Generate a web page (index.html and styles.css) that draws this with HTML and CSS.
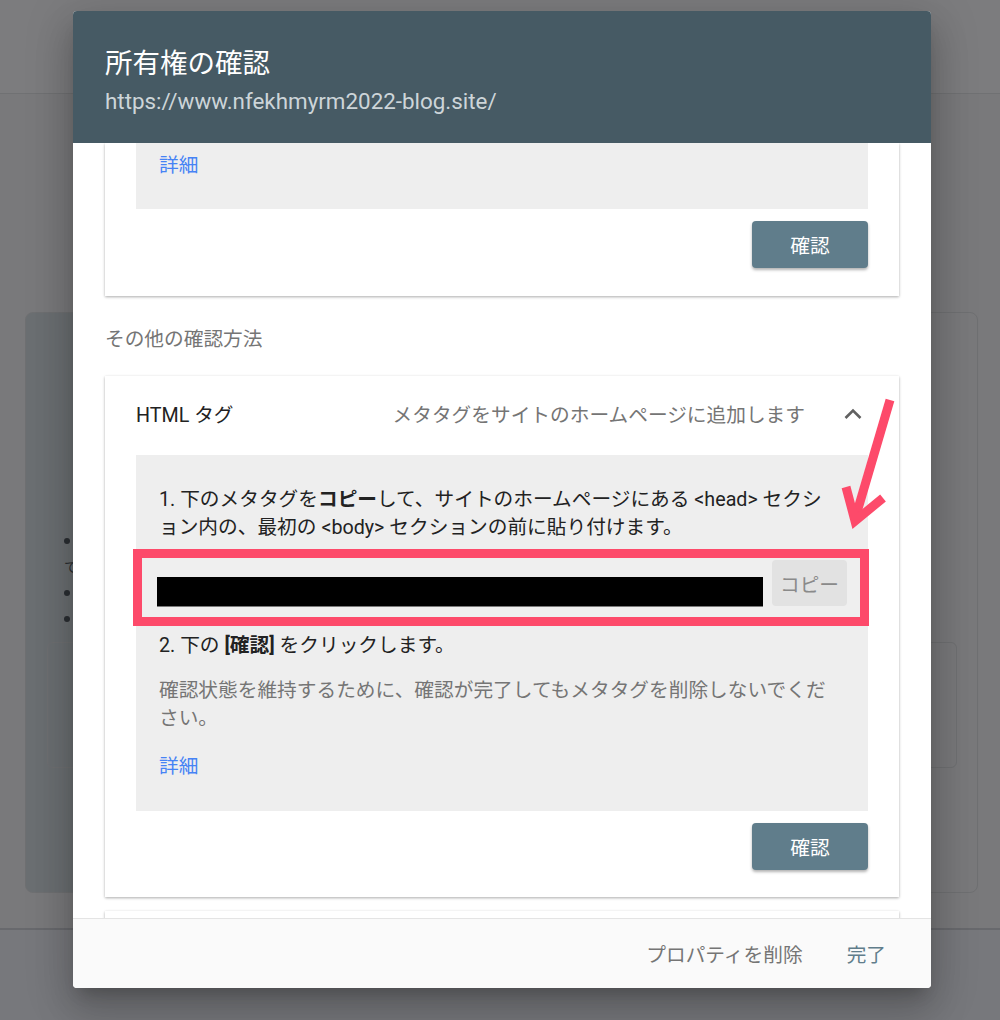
FILE: index.html
```html
<!DOCTYPE html>
<html lang="ja">
<head>
<meta charset="utf-8">
<title>所有権の確認</title>
<link rel="stylesheet" href="styles.css">
</head>
<body>
<div class="page">
  <div class="page-top"></div>
  <div class="page-main">
    <div class="bg-card">
      <div class="bg-lines">
        <div class="bg-line"><span class="dot"></span>ウェブサイトのホームページ</div>
        <div class="bg-line">ています</div>
        <div class="bg-line"><span class="dot"></span>サイトの所有者</div>
        <div class="bg-line"><span class="dot"></span>プロパティ</div>
      </div>
      <div class="bg-box"></div>
    </div>
  </div>
  <div class="page-bottom"></div>
</div>

<div class="dialog">
  <header class="dlg-head">
    <h1 class="dlg-title">所有権の確認</h1>
    <div class="dlg-url">https://www.nfekhmyrm2022-blog.site/</div>
  </header>

  <div class="dlg-body">
    <section class="card card-cut">
      <div class="gray gray-top"><a class="link">詳細</a></div>
      <div class="actions"><button class="btn">確認</button></div>
    </section>

    <h2 class="section-label">その他の確認方法</h2>

    <section class="card">
      <div class="card-head">
        <span class="method">HTML タグ</span>
        <span class="desc">メタタグをサイトのホームページに追加します</span>
        <span class="chev">
          <svg width="24" height="24" viewBox="0 0 24 24"><path d="M4.5 16 L12 8.5 L19.5 16" fill="none" stroke="#616161" stroke-width="2.6"/></svg>
        </span>
      </div>
      <div class="gray">
        <p class="step">1. 下のメタタグを<b>コピー</b>して、サイトのホームページにある &lt;head&gt; セクション内の、最初の &lt;body&gt; セクションの前に貼り付けます。</p>
        <div class="meta-row">
          <span class="redacted"></span>
          <button class="copy">コピー</button>
        </div>
        <p class="step step2">2. 下の <b>[確認]</b> をクリックします。</p>
        <p class="note">確認状態を維持するために、確認が完了してもメタタグを削除しないでください。</p>
        <a class="link">詳細</a>
      </div>
      <div class="actions"><button class="btn">確認</button></div>
    </section>

    <section class="card card-peek"></section>
  </div>

  <footer class="dlg-foot">
    <button class="foot-btn">プロパティを削除</button>
    <button class="foot-btn foot-done">完了</button>
  </footer>
</div>

<svg class="arrow" width="1000" height="1020" viewBox="0 0 1000 1020">
  <line x1="890" y1="400" x2="855" y2="519" stroke="#fd4a6a" stroke-width="9"/>
  <polyline points="846,487 855,521 883,498" fill="none" stroke="#fd4a6a" stroke-width="9" stroke-linejoin="miter"/>
</svg>
</body>
</html>
```

FILE: styles.css
```css
* { box-sizing: border-box; }

html, body {
  margin: 0;
  padding: 0;
}

body {
  width: 1000px;
  height: 1020px;
  overflow: hidden;
  background: #79797b;
  font-family: Roboto, "Noto Sans CJK JP", sans-serif;
  position: relative;
}

/* dimmed page underneath */
.page {
  display: flex;
  flex-direction: column;
  height: 1020px;
}

.page-top {
  height: 94px;
  background: #7c7c7e;
  border-bottom: 1px solid #707173;
}

.page-main {
  height: 834px;
  padding: 218px 22px 0 25px;
}

.bg-card {
  height: 581px;
  border: 1px solid #6f7072;
  border-radius: 8px;
  background: linear-gradient(to right, #6b6f72 0, #6b6f72 50%, #79797b 50%);
  padding-top: 215px;
}

.bg-lines {
  padding-left: 38px;
  font-size: 14px;
  color: #2b2f33;
}

.bg-line {
  height: 26px;
  line-height: 26px;
  white-space: nowrap;
  display: flex;
  align-items: center;
}

.dot {
  width: 6px;
  height: 6px;
  border-radius: 50%;
  background: #2b2f33;
  margin-right: 10px;
}

.bg-box {
  margin: 10px 20px 0 21px;
  height: 126px;
  border: 1px solid #6f7072;
  border-radius: 6px;
}

.page-bottom {
  flex: 1;
  background: #77787c;
  border-top: 2px solid #68696d;
}

/* dialog */
.dialog {
  position: absolute;
  left: 73px;
  top: 11px;
  width: 858px;
  height: 977px;
  background: #fff;
  border-radius: 4px;
  overflow: hidden;
  display: flex;
  flex-direction: column;
  box-shadow: 0 11px 15px -7px rgba(0,0,0,.2), 0 24px 38px 3px rgba(0,0,0,.14), 0 9px 46px 8px rgba(0,0,0,.12);
}

.dlg-head {
  height: 132px;
  flex: none;
  background: #465a64;
  padding: 35px 32px 0;
}

.dlg-title {
  margin: 0;
  font-size: 27.5px;
  line-height: 36px;
  font-weight: 400;
  color: #fff;
}

.dlg-url {
  margin-top: 5px;
  font-size: 22.4px;
  line-height: 28px;
  color: #cdd5d9;
}

.dlg-body {
  height: 775px;
  flex: none;
  overflow: hidden;
  padding: 0 32px;
}

.card {
  background: #fff;
  padding: 0 31px 27px;
  box-shadow: 0 1px 3px rgba(0,0,0,.22), 0 1px 2px rgba(0,0,0,.12);
}

.card-cut {
  padding-bottom: 28px;
}

.gray {
  background: #eeeeee;
  padding: 31px 33px 30px 23px;
  font-size: 19.7px;
  line-height: 28px;
  color: #222;
}

.gray-top {
  padding-top: 9px;
  padding-bottom: 29px;
}

.link {
  display: block;
  color: #4683f5;
  text-decoration: none;
}

.actions {
  display: flex;
  justify-content: flex-end;
  padding-top: 12px;
}

.btn {
  width: 116px;
  height: 47px;
  border: none;
  border-radius: 4px;
  background: #607d8b;
  color: #fff;
  font-family: inherit;
  font-size: 19.7px;
  box-shadow: 0 2px 3px rgba(0,0,0,.3);
}

.section-label {
  margin: 30px 0 22px;
  font-size: 19.7px;
  line-height: 28px;
  font-weight: 400;
  color: #757575;
}

.card-head {
  height: 79px;
  display: flex;
  align-items: center;
  font-size: 19.7px;
  padding-bottom: 4px;
}

.method {
  color: #222;
}

.desc {
  margin-left: auto;
  color: #757575;
}

.chev {
  width: 24px;
  height: 24px;
  margin-left: 36px;
  margin-right: 3px;
}

.chev svg {
  display: block;
}

.step {
  margin: 0;
}

.step b {
  font-weight: 700;
}

.meta-row {
  display: flex;
  align-items: flex-start;
  height: 77px;
  margin: 7px -34px 0 -26px;
  padding: 0 13px 0 15px;
  border: 9px solid #fd4a6a;
  background: #efefef;
}

.redacted {
  flex: 1;
  height: 30px;
  margin-top: 19px;
  background: #000;
  border-bottom: 1px solid #7a7a7a;
}

.copy {
  width: 75px;
  height: 46px;
  margin: 2px 0 0 9px;
  border: none;
  border-radius: 4px;
  background: #e2e2e2;
  color: #8a8a8a;
  font-family: inherit;
  font-size: 19.7px;
  padding: 0;
}

.step2 {
  margin-top: 6px;
}

.note {
  margin: 17px 0 20px;
  color: #757575;
}

.card-peek {
  margin-top: 14px;
  height: 60px;
}

.dlg-foot {
  height: 70px;
  flex: none;
  background: #fafafa;
  border-top: 1px solid #e4e4e4;
  display: flex;
  justify-content: flex-end;
  align-items: center;
  padding-right: 45px;
  gap: 44px;
  position: relative;
}

.foot-btn {
  border: none;
  background: none;
  padding: 0;
  font-family: inherit;
  font-size: 19.7px;
  color: #757575;
}

.foot-done {
  color: #607d8b;
}

.arrow {
  position: absolute;
  left: 0;
  top: 0;
  pointer-events: none;
}
```
